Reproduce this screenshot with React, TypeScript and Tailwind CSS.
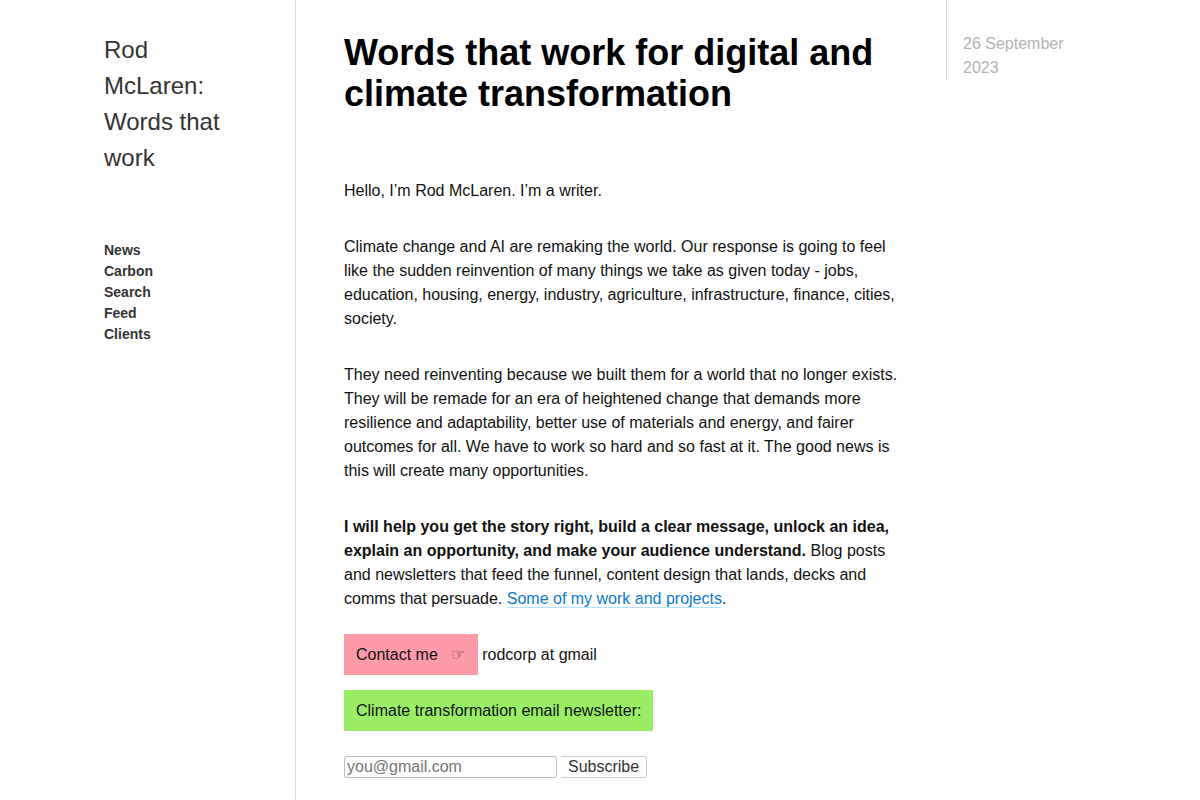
const navLinks = ["News", "Carbon", "Search", "Feed", "Clients"];

export default function App() {
  return (
    <div className="flex min-h-screen bg-white pl-26 font-['Liberation_Sans',Arial,sans-serif] text-base text-[#111]">
      <header className="w-48 shrink-0 border-r border-[#ddd] pt-8 pr-12 text-[#333]">
        <a href="#home" className="block text-2xl leading-9">
          Rod McLaren: Words that work
        </a>
        <nav className="mt-16 text-sm leading-[21px] font-bold">
          <ul>
            {navLinks.map((label) => (
              <li key={label}>
                <a href={`#${label.toLowerCase()}`}>{label}</a>
              </li>
            ))}
          </ul>
        </nav>
      </header>
      <main className="ml-12 max-w-[554px] flex-1 pt-8">
        <h1 className="text-4xl leading-[41px] font-bold text-black">
          Words that work for digital and climate transformation
        </h1>
        <div className="mt-[65px] space-y-8">
          <p>Hello, I’m Rod McLaren. I’m a writer.</p>
          <p>
            Climate change and AI are remaking the world. Our response is going to feel like the
            sudden reinvention of many things we take as given today - jobs, education, housing,
            energy, industry, agriculture, infrastructure, finance, cities, society.
          </p>
          <p>
            They need reinventing because we built them for a world that no longer exists. They will
            be remade for an era of heightened change that demands more resilience and adaptability,
            better use of materials and energy, and fairer outcomes for all. We have to work so hard
            and so fast at it. The good news is this will create many opportunities.
          </p>
          <p>
            <strong>
              I will help you get the story right, build a clear message, unlock an idea, explain an
              opportunity, and make your audience understand.
            </strong>{" "}
            Blog posts and newsletters that feed the funnel, content design that lands, decks and
            comms that persuade.{" "}
            <a href="#work" className="border-b border-[#b3e0fa] text-[#0a7bcc]">
              Some of my work and projects
            </a>
            .
          </p>
        </div>
        <p className="mt-[23px] flex items-baseline gap-1">
          <a href="#contact" className="bg-[#ff9aa9] pt-[9px] pr-[13px] pb-2 pl-3">
            Contact me{"\u00a0\u00a0\u00a0"}
            <span className="text-[#111]/80">☞</span>
          </a>
          rodcorp at gmail
        </p>
        <p className="mt-[15px] flex">
          <label htmlFor="email" className="bg-[#99ee66] px-3 pt-[9px] pb-2">
            Climate transformation email newsletter:
          </label>
        </p>
        <form className="mt-[25px] flex gap-1" onSubmit={(event) => event.preventDefault()}>
          <input
            id="email"
            type="email"
            placeholder="you@gmail.com"
            className="h-[22px] w-[213px] rounded-[3px] border border-[#bbb] px-0.5 leading-5 placeholder:text-[#757575]"
          />
          <button
            type="submit"
            className="h-[22px] rounded-r-[3px] border border-l-0 border-[#ccc] px-[7px] leading-5 text-[#333]"
          >
            Subscribe
          </button>
        </form>
      </main>
      <aside className="ml-12 h-20 w-36 shrink-0 border-l border-[#ddd] pt-8 pl-4 text-[#b3b3b3]">
        <time dateTime="2023-09-26">26 September 2023</time>
      </aside>
    </div>
  );
}
